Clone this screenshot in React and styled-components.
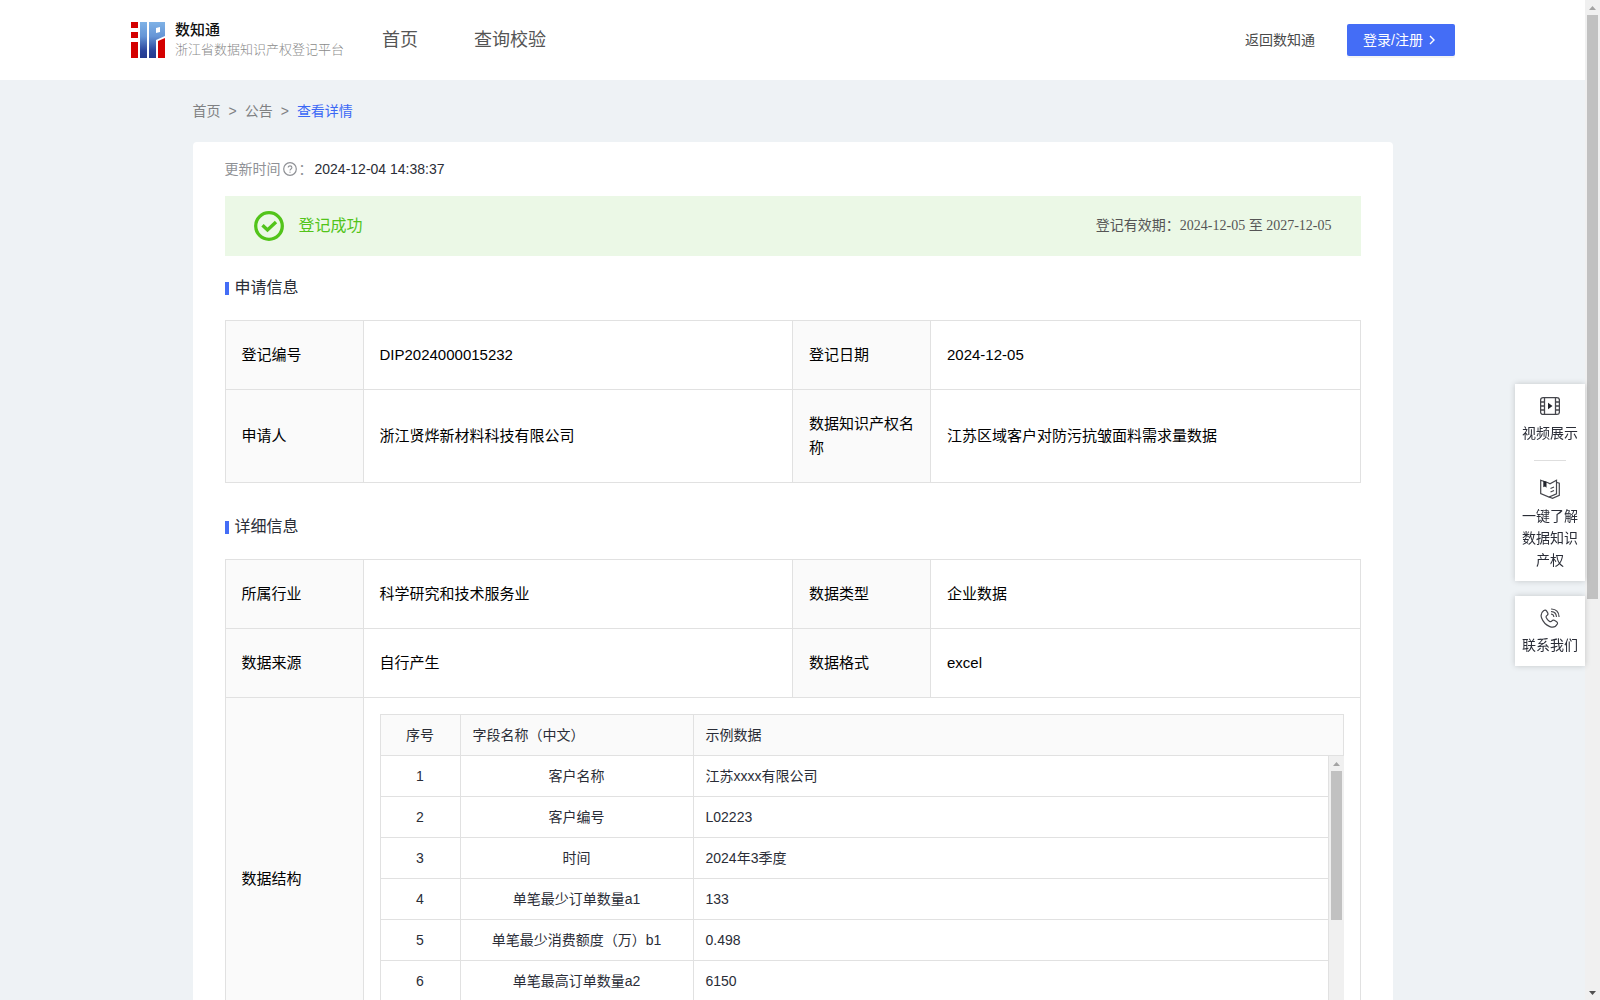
import React from "react";
import styled, { createGlobalStyle } from "styled-components";

const GlobalStyle = createGlobalStyle`
  * {
    box-sizing: border-box;
  }
  body {
    margin: 0;
    background: #eef2f5;
    color: #2a2d37;
    font: 14px/22px "Liberation Sans", "Noto Sans CJK SC", sans-serif;
  }
  a {
    color: inherit;
    text-decoration: none;
  }
`;

const Screen = styled.div`
  display: flex;
  height: 100vh;
`;

const Page = styled.div`
  flex: 1;
  min-width: 0;
  overflow-y: auto;
  scrollbar-width: none;
`;

const Header = styled.header`
  display: flex;
  align-items: center;
  height: 80px;
  padding: 0 130px 0 131px;
  background: #fff;
`;

const Brand = styled.a`
  display: flex;
  align-items: center;
  gap: 10px;
  width: 251px;
  white-space: nowrap;
`;

const BrandText = styled.span`
  display: flex;
  flex-direction: column;
`;

const BrandName = styled.strong`
  font-size: 15px;
  line-height: 20px;
  font-weight: 500;
  color: #111;
`;

const BrandSub = styled.span`
  font-size: 13px;
  line-height: 20px;
  font-weight: 300;
  color: #8a8a8a;
`;

const Nav = styled.nav`
  display: flex;
  flex: 1;
  gap: 56px;
  font-size: 18px;
  color: #555;
`;

const HeaderRight = styled.div`
  display: flex;
  align-items: center;
  gap: 32px;
  color: #4a4a4a;
`;

const LoginButton = styled.button`
  display: flex;
  align-items: center;
  gap: 2px;
  height: 32px;
  padding: 0 16px;
  border: 0;
  border-radius: 2px;
  background: #446df6;
  box-shadow: 0 2px 0 rgba(0, 0, 0, 0.045);
  color: #fff;
  font: inherit;
  cursor: pointer;
`;

const Container = styled.div`
  max-width: 1200px;
  margin: 0 auto;
  padding: 20px 0 40px;
`;

const Breadcrumb = styled.nav`
  display: flex;
  gap: 8px;
  margin-bottom: 20px;
  color: #7f8183;
`;

const CrumbCurrent = styled.a`
  color: #3b68f5;
`;

const Card = styled.main`
  padding: 16px 32px 32px;
  border-radius: 4px;
  background: #fff;
`;

const UpdateRow = styled.div`
  display: flex;
  align-items: center;
  gap: 2px;
  color: #8f9196;

  time {
    color: #2a2d37;
  }
`;

const Banner = styled.section`
  display: flex;
  align-items: center;
  gap: 15px;
  height: 60px;
  margin-top: 16px;
  padding: 0 29px;
  background: #ebf8e6;
`;

const BannerStatus = styled.span`
  flex: 1;
  font-size: 16px;
  color: #52c41a;
`;

const BannerPeriod = styled.span`
  font-family: "Liberation Serif", "Noto Sans CJK SC", serif;
  color: #555;
`;

const Heading = styled.h2`
  display: flex;
  align-items: center;
  gap: 6px;
  margin: ${(p) => (p.$spaced ? 32 : 20)}px 0 20px;
  font-size: 16px;
  line-height: 24px;
  font-weight: 400;

  &::before {
    content: "";
    width: 4px;
    height: 13px;
    background: #446df6;
  }
`;

const InfoTable = styled.table`
  width: 100%;
  table-layout: fixed;
  border-collapse: collapse;
  color: #000;
  font-size: 15px;
  line-height: 24px;

  > tbody > tr > th,
  > tbody > tr > td {
    padding: 22px 16px;
    border: 1px solid #e1e1e1;
    text-align: left;
    font-weight: 400;
  }
  > tbody > tr > th {
    background: #fafafa;
  }
  > tbody > tr > td[colspan] {
    padding: 16px;
  }
`;

const LabelCol = styled.col`
  width: 138px;
`;

const FieldTable = styled.table`
  width: 100%;
  table-layout: fixed;
  border-spacing: 0;
  border-left: 1px solid #e1e1e1;
  border-top: ${(p) => (p.$head ? "1px solid #e1e1e1" : "0")};
  color: #2a2d37;
  font-size: 14px;
  line-height: 22px;

  th,
  td {
    height: 41px;
    padding: 0 12px;
    border-right: 1px solid #e1e1e1;
    border-bottom: 1px solid #e1e1e1;
    text-align: left;
    font-weight: 400;
  }
  th {
    background: #fafafa;
  }
  th:first-child,
  td:first-child,
  td:nth-child(2) {
    text-align: center;
  }
`;

const IndexCol = styled.col`
  width: 80px;
`;

const NameCol = styled.col`
  width: 233px;
`;

const FieldBody = styled.div`
  display: flex;
  height: 288px;
`;

const FieldScroll = styled.div`
  flex: 1;
  overflow-y: auto;
  scrollbar-width: none;
`;

const Track = styled.div`
  display: flex;
  flex-direction: column;
  align-items: center;
  width: 15px;
  background: #f0f0f0;
`;

const Thumb = styled.div`
  flex: 0 0 ${(p) => p.$size};
  width: 11px;
  margin-bottom: auto;
  background: #c1c1c1;
`;

const SideBar = styled.aside`
  position: fixed;
  top: 384px;
  right: 15px;
  display: flex;
  flex-direction: column;
  gap: 15px;
  width: 70px;
`;

const SideCard = styled.div`
  background: #fff;
  box-shadow: 0 0 6px rgba(0, 0, 0, 0.18);
`;

const SideItem = styled.a`
  display: flex;
  flex-direction: column;
  align-items: center;
  gap: 6px;
  padding: 12px 7px 10px;
  text-align: center;
`;

const SideDivider = styled.hr`
  width: 32px;
  height: 1px;
  margin: 6px auto;
  border: 0;
  background: #dedede;
`;

const Logo = () => (
  <svg width="34" height="36" viewBox="0 0 34 36" aria-hidden="true">
    <defs>
      <linearGradient id="logoBlue" x1="0" y1="0" x2="0" y2="36" gradientUnits="userSpaceOnUse">
        <stop offset="0" stopColor="#7fb2e6" />
        <stop offset="0.4" stopColor="#6595d6" />
        <stop offset="0.8" stopColor="#2b459c" />
        <stop offset="1" stopColor="#243a8e" />
      </linearGradient>
    </defs>
    <path fill="#d40000" d="M0 0h7v6H0zM0 10h7v6H0zM0 20h7v16H0zM27 19l7-3v20h-7z" />
    <path fill="url(#logoBlue)" d="M9 0h7v36H9z" />
    <path fill="url(#logoBlue)" fillRule="evenodd" d="M18 0h16v14l-9 4v18h-7zM25 6v5l4-1V5z" />
  </svg>
);

const ChevronIcon = () => (
  <svg width="14" height="14" viewBox="0 0 14 14" fill="none" stroke="#fff" strokeWidth="1.4" aria-hidden="true">
    <path d="M5 3l4 4-4 4" />
  </svg>
);

const HelpIcon = () => (
  <svg width="14" height="14" viewBox="0 0 14 14" fill="none" stroke="#8f9196" aria-hidden="true">
    <circle cx="7" cy="7" r="6.3" strokeWidth="1.2" />
    <path d="M5.2 5.6c0-2.4 3.7-2.3 3.7 0C8.9 7 7 6.9 7 8.5" strokeWidth="1.1" />
    <circle cx="7" cy="10.2" r="0.6" fill="#8f9196" stroke="none" />
  </svg>
);

const SuccessIcon = () => (
  <svg width="30" height="30" viewBox="0 0 30 30" fill="none" stroke="#52c41a" aria-hidden="true">
    <circle cx="15" cy="15" r="13.3" strokeWidth="3.3" />
    <path d="M8.5 14.2l5 4.8 8.5-8" strokeWidth="3.4" />
  </svg>
);

const VideoIcon = () => (
  <svg width="20" height="20" viewBox="0 0 20 20" fill="none" stroke="#45464c" strokeWidth="1.3" aria-hidden="true">
    <rect x="0.6" y="1.6" width="18.8" height="16.8" rx="2.5" />
    <path d="M4.5 1.6v16.8M15.5 1.6v16.8M0.6 6h3.9M0.6 10h3.9M0.6 14h3.9M15.5 6h3.9M15.5 10h3.9M15.5 14h3.9" />
    <path d="M8 6.8l4.5 3.2L8 13.2z" fill="#22242c" stroke="none" />
  </svg>
);

const BookIcon = () => (
  <svg width="20" height="20" viewBox="0 0 20 20" fill="none" stroke="#45464c" strokeWidth="1.2" aria-hidden="true">
    <path d="M0.7 1.2L8 3.8l2 1 6.5-3.6v13.6L9 18 0.7 14.5z" />
    <path d="M17 3.5l2.3 0.8v12L12.5 19.3 9 18" />
    <path d="M10.5 9.5l3.5-1.5M10.5 13l3.5-1.5" />
    <path d="M3.3 1.8l3.2 1v6L5 7.5 3.3 8.2z" fill="#22242c" stroke="none" />
  </svg>
);

const PhoneIcon = () => (
  <svg width="20" height="20" viewBox="0 0 20 20" fill="none" stroke="#45464c" strokeWidth="1.2" strokeLinecap="round" aria-hidden="true">
    <path d="M3.8 2.6C1.2 4.5 0.5 7 1.6 10c1.5 4 4.3 7 8.2 8.6 3.3 1.3 6 .2 7.5-2.6.5-1-.1-1.900-1-2.500l-2-1.200c-1-.5-1.700-.3-2.400.6-.8 1-1.500 1.100-2.600.3-1.500-1.100-2.500-2.400-3.100-3.800-.4-1 .1-1.600 1-2.200.9-.7 1-1.400.5-2.300L6.500 2.900c-.7-1-1.700-1.200-2.700-.3z" />
    <path d="M11.500 1c4.500.3 7.300 3 7.500 7.500M11.500 3.600c3 .2 4.700 2 4.900 4.900M11.500 6.200c1.500.2 2.200.9 2.300 2.300" />
  </svg>
);

const ArrowIcon = styled(({ down, color, className }) => (
  <svg className={className} width="15" height="15" viewBox="0 0 15 15" aria-hidden="true">
    <path d={down ? "M4 6h7L7.5 10z" : "M4 10h7L7.5 6z"} fill={color} />
  </svg>
))`
  flex-shrink: 0;
`;

const applyInfo = [
  ["登记编号", "DIP2024000015232", "登记日期", "2024-12-05"],
  ["申请人", "浙江贤烨新材料科技有限公司", "数据知识产权名称", "江苏区域客户对防污抗皱面料需求量数据"],
];

const detailInfo = [
  ["所属行业", "科学研究和技术服务业", "数据类型", "企业数据"],
  ["数据来源", "自行产生", "数据格式", "excel"],
];

const fields = [
  ["客户名称", "江苏xxxx有限公司"],
  ["客户编号", "L02223"],
  ["时间", "2024年3季度"],
  ["单笔最少订单数量a1", "133"],
  ["单笔最少消费额度（万）b1", "0.498"],
  ["单笔最高订单数量a2", "6150"],
];

const InfoCols = () => (
  <colgroup>
    <LabelCol />
    <col />
    <LabelCol />
    <col />
  </colgroup>
);

const FieldCols = () => (
  <colgroup>
    <IndexCol />
    <NameCol />
    <col />
  </colgroup>
);

const InfoRow = ({ cells }) => (
  <tr>
    <th scope="row">{cells[0]}</th>
    <td>{cells[1]}</td>
    <th scope="row">{cells[2]}</th>
    <td>{cells[3]}</td>
  </tr>
);

const FieldList = () => (
  <>
    <FieldTable $head>
      <FieldCols />
      <thead>
        <tr>
          <th>序号</th>
          <th>字段名称（中文）</th>
          <th>示例数据</th>
        </tr>
      </thead>
    </FieldTable>
    <FieldBody>
      <FieldScroll>
        <FieldTable>
          <FieldCols />
          <tbody>
            {fields.map(([name, sample], i) => (
              <tr key={name}>
                <td>{i + 1}</td>
                <td>{name}</td>
                <td>{sample}</td>
              </tr>
            ))}
          </tbody>
        </FieldTable>
      </FieldScroll>
      <Track>
        <ArrowIcon color="#a3a3a3" />
        <Thumb $size="149px" />
        <ArrowIcon down color="#505050" />
      </Track>
    </FieldBody>
  </>
);

export default function App() {
  return (
    <Screen>
      <GlobalStyle />
      <Page>
        <Header>
          <Brand href="#">
            <Logo />
            <BrandText>
              <BrandName>数知通</BrandName>
              <BrandSub>浙江省数据知识产权登记平台</BrandSub>
            </BrandText>
          </Brand>
          <Nav>
            <a href="#">首页</a>
            <a href="#">查询校验</a>
          </Nav>
          <HeaderRight>
            <a href="#">返回数知通</a>
            <LoginButton type="button">
              登录/注册
              <ChevronIcon />
            </LoginButton>
          </HeaderRight>
        </Header>
        <Container>
          <Breadcrumb>
            <a href="#">首页</a>
            <span>&gt;</span>
            <a href="#">公告</a>
            <span>&gt;</span>
            <CrumbCurrent href="#">查看详情</CrumbCurrent>
          </Breadcrumb>
          <Card>
            <UpdateRow>
              <span>更新时间</span>
              <HelpIcon />
              <span>：</span>
              <time>2024-12-04 14:38:37</time>
            </UpdateRow>
            <Banner>
              <SuccessIcon />
              <BannerStatus>登记成功</BannerStatus>
              <BannerPeriod>登记有效期：2024-12-05 至 2027-12-05</BannerPeriod>
            </Banner>
            <Heading>申请信息</Heading>
            <InfoTable>
              <InfoCols />
              <tbody>
                {applyInfo.map((cells) => (
                  <InfoRow key={cells[0]} cells={cells} />
                ))}
              </tbody>
            </InfoTable>
            <Heading $spaced>详细信息</Heading>
            <InfoTable>
              <InfoCols />
              <tbody>
                {detailInfo.map((cells) => (
                  <InfoRow key={cells[0]} cells={cells} />
                ))}
                <tr>
                  <th scope="row">数据结构</th>
                  <td colSpan={3}>
                    <FieldList />
                  </td>
                </tr>
              </tbody>
            </InfoTable>
          </Card>
        </Container>
      </Page>
      <Track>
        <ArrowIcon color="#a3a3a3" />
        <Thumb $size="584px" />
        <ArrowIcon down color="#505050" />
      </Track>
      <SideBar>
        <SideCard>
          <SideItem href="#">
            <VideoIcon />
            视频展示
          </SideItem>
          <SideDivider />
          <SideItem href="#">
            <BookIcon />
            一键了解数据知识产权
          </SideItem>
        </SideCard>
        <SideCard>
          <SideItem href="#">
            <PhoneIcon />
            联系我们
          </SideItem>
        </SideCard>
      </SideBar>
    </Screen>
  );
}
